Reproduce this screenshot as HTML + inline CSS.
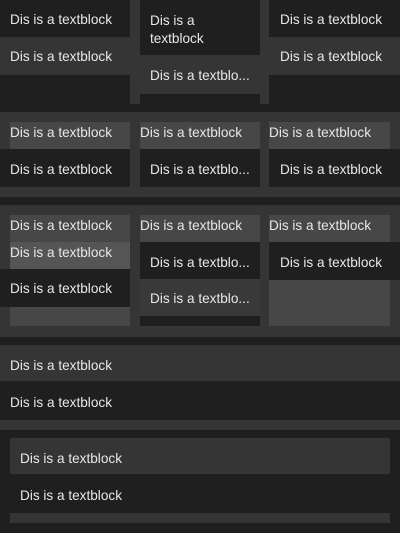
<!DOCTYPE html>
<html><head><style>
*{margin:0;padding:0;box-sizing:border-box}
body{width:400px;height:533px;background:#1f1f1f;position:relative;overflow:hidden;font-family:"Liberation Sans",sans-serif;font-size:13.6px;color:#e8e8e8}
div{position:absolute}
.t{white-space:nowrap;line-height:18px;margin-top:1px}
.d{background:#1f1f1f}.m{background:#353535}.l{background:#474747}.x{background:#555}.n{background:#393939}
</style></head><body>
<div class="m" style="left:0;top:37px;width:130px;height:38px"></div>
<div class="m" style="left:130px;top:0;width:139px;height:104px"></div>
<div class="d" style="left:140px;top:0;width:120px;height:55px"></div>
<div class="d" style="left:140px;top:94px;width:120px;height:10px"></div>
<div class="m" style="left:269px;top:37px;width:131px;height:38px"></div>
<div class="t" style="left:10px;top:10px">Dis is a textblock</div>
<div class="t" style="left:10px;top:47px">Dis is a textblock</div>
<div class="t" style="left:150px;top:11px">Dis is a<br>textblock</div>
<div class="t" style="left:150px;top:66px">Dis is a textblo...</div>
<div class="t" style="left:280px;top:10px">Dis is a textblock</div>
<div class="t" style="left:280px;top:47px">Dis is a textblock</div>
<div class="m" style="left:0;top:112px;width:400px;height:85px"></div>
<div class="l" style="left:10px;top:122px;width:120px;height:27px"></div>
<div class="l" style="left:140px;top:122px;width:120px;height:27px"></div>
<div class="l" style="left:269px;top:122px;width:121px;height:27px"></div>
<div class="d" style="left:0;top:149px;width:130px;height:38px"></div>
<div class="d" style="left:140px;top:149px;width:120px;height:38px"></div>
<div class="d" style="left:269px;top:149px;width:131px;height:38px"></div>
<div class="t" style="left:10px;top:123px">Dis is a textblock</div>
<div class="t" style="left:140px;top:123px">Dis is a textblock</div>
<div class="t" style="left:269px;top:123px">Dis is a textblock</div>
<div class="t" style="left:10px;top:160px">Dis is a textblock</div>
<div class="t" style="left:150px;top:160px">Dis is a textblo...</div>
<div class="t" style="left:280px;top:160px">Dis is a textblock</div>
<div class="m" style="left:0;top:205px;width:400px;height:132px"></div>
<div class="l" style="left:10px;top:215px;width:120px;height:111px"></div>
<div class="x" style="left:10px;top:242px;width:120px;height:27px"></div>
<div class="d" style="left:0;top:269px;width:130px;height:38px"></div>
<div class="l" style="left:140px;top:215px;width:120px;height:27px"></div>
<div class="d" style="left:140px;top:242px;width:120px;height:37px"></div>
<div class="n" style="left:140px;top:279px;width:120px;height:37px"></div>
<div class="d" style="left:140px;top:316px;width:120px;height:10px"></div>
<div class="l" style="left:269px;top:215px;width:121px;height:111px"></div>
<div class="d" style="left:269px;top:242px;width:131px;height:38px"></div>
<div class="t" style="left:10px;top:216px">Dis is a textblock</div>
<div class="t" style="left:10px;top:243px">Dis is a textblock</div>
<div class="t" style="left:10px;top:279px">Dis is a textblock</div>
<div class="t" style="left:140px;top:216px">Dis is a textblock</div>
<div class="t" style="left:150px;top:253px">Dis is a textblo...</div>
<div class="t" style="left:150px;top:289px">Dis is a textblo...</div>
<div class="t" style="left:269px;top:216px">Dis is a textblock</div>
<div class="t" style="left:280px;top:253px">Dis is a textblock</div>
<div class="m" style="left:0;top:345px;width:400px;height:36px"></div>
<div class="m" style="left:0;top:420px;width:400px;height:10px"></div>
<div class="t" style="left:10px;top:356px">Dis is a textblock</div>
<div class="t" style="left:10px;top:393px">Dis is a textblock</div>
<div class="m" style="left:10px;top:438px;width:380px;height:36px"></div>
<div class="m" style="left:10px;top:513px;width:380px;height:10px"></div>
<div class="t" style="left:20px;top:449px">Dis is a textblock</div>
<div class="t" style="left:20px;top:486px">Dis is a textblock</div>
</body></html>
